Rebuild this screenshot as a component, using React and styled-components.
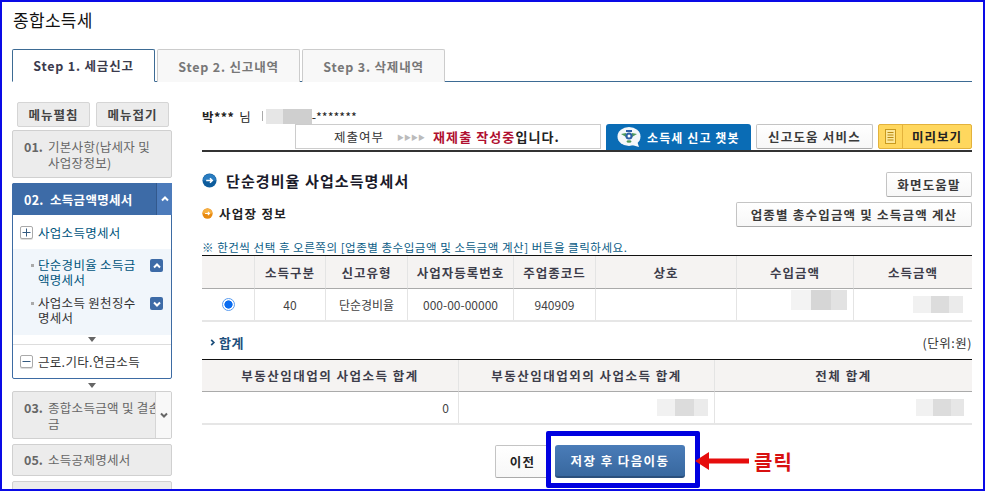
import React from 'react'
import styled, { createGlobalStyle } from 'styled-components'

const Global = createGlobalStyle`
  html, body { margin: 0; padding: 0; background: #fff; }
  body { font-family: "Noto Sans CJK KR", "Noto Sans", sans-serif; color: #333; }
  * { box-sizing: border-box; }
`

const Frame = styled.div`
  position: relative;
  width: 985px;
  height: 491px;
  border: 2px solid #0a0ae6;
  overflow: hidden;
  padding: 0 11px 0 10px;
`

const Title = styled.h1`
  margin: 0;
  height: 47px;
  padding: 5px 0 0 1px;
  font-size: 17px;
  line-height: 26px;
  font-weight: 400;
  color: #111;
  letter-spacing: 0.3px;
`

const Tabs = styled.div`
  display: flex;
  gap: 2px;
  height: 33px;
  border-bottom: 1px solid #3d6b94;
`

const Tab = styled.div`
  width: 143px;
  height: 33px;
  display: flex;
  align-items: center;
  justify-content: center;
  font-size: 12.5px;
  font-weight: 700;
  letter-spacing: 0.8px;
  border: 1px solid ${p => (p.$active ? '#3d6b94' : '#ccc')};
  border-bottom: ${p => (p.$active ? '1px solid #fff' : 'none')};
  background: ${p => (p.$active ? '#fff' : '#f8f8f8')};
  color: ${p => (p.$active ? '#3b3b4d' : '#777')};
  border-radius: 2px 2px 0 0;
`

const Body = styled.div`
  display: flex;
  gap: 30px;
  margin-top: 20px;
`

const Sidebar = styled.aside`
  width: 160px;
  flex: none;
`

const MenuButtons = styled.div`
  display: flex;
  gap: 6px;
  padding-left: 5px;
  margin-bottom: 3px;
`

const MenuButton = styled.div`
  width: 73px;
  height: 25px;
  display: flex;
  align-items: center;
  justify-content: center;
  background: #ececec;
  border: 1px solid #d5d5d5;
  border-radius: 2px;
  font-size: 12.5px;
  font-weight: 700;
  letter-spacing: 1px;
  color: #444;
`

const Step = styled.div`
  position: relative;
  display: flex;
  height: ${p => p.$h}px;
  margin-bottom: 5px;
  padding: ${p => p.$top || 8}px 0 0 11px;
  background: #ececec;
  border: 1px solid #d0d0d0;
  border-radius: 2px;
  font-size: 12.5px;
  line-height: 16px;
  color: #666;
  overflow: hidden;
`

const StepNo = styled.b`
  flex: none;
  width: 24px;
  color: #666;
`

const StepText = styled.span`
  width: 112px;
  flex: none;
  letter-spacing: 0.3px;
  word-break: keep-all;
`

const StepClip = styled.span`
  width: 121px;
  flex: none;
  letter-spacing: 0.3px;
  word-break: break-all;
`

const StepToggle = styled.div`
  position: absolute;
  top: 0;
  right: 0;
  bottom: 0;
  width: 16px;
  display: flex;
  align-items: center;
  justify-content: center;
  background: #f8f8f8;
  border-left: 1px solid #d6d6d6;
`

const OpenStep = styled.div`
  border: 1px solid #3d6ba3;
  border-radius: 2px;
  background: #fff;
`

const OpenHead = styled.div`
  display: flex;
  align-items: center;
  height: 32px;
  margin: -1px -1px 0;
  padding-left: 12px;
  background: #3d6ba7;
  border-radius: 2px 2px 0 0;
  font-size: 12.5px;
  font-weight: 700;
  letter-spacing: 0.3px;
  color: #fff;
  position: relative;
`

const OpenToggle = styled.div`
  position: absolute;
  top: 0;
  right: 0;
  bottom: 0;
  width: 16px;
  display: flex;
  align-items: center;
  justify-content: center;
  background: #4c7bbb;
  border-left: 1px solid #33598d;
`

const SubRow = styled.div`
  display: flex;
  align-items: center;
  gap: 5px;
  height: ${p => p.$h}px;
  padding-left: 7px;
  font-size: 12.5px;
  letter-spacing: 0.3px;
  color: ${p => (p.$link ? '#00557d' : '#333')};
`

const PlusBox = styled.span`
  width: 13px;
  height: 13px;
  flex: none;
  display: flex;
  align-items: center;
  justify-content: center;
  background: #fff;
  border: 1px solid #aaa;
  border-radius: 2px;
  box-shadow: 0 1px 0 #ddd;
`

const SubList = styled.div`
  background: #f1f6fb;
  padding-top: 9px;
  height: 86px;
`

const SubItem = styled.div`
  position: relative;
  display: flex;
  height: 38px;
  padding-left: 18px;
  font-size: 12.5px;
  line-height: 14.5px;
  letter-spacing: 0.3px;
  color: ${p => (p.$link ? '#00557d' : '#333')};
  &::before {
    content: '';
    position: absolute;
    left: 18px;
    top: 6px;
    width: 3px;
    height: 3px;
    background: #aaa;
  }
`

const SubText = styled.span`
  display: block;
  width: 108px;
  padding-left: 7px;
  word-break: break-all;
`

const SquareToggle = styled.span`
  width: 13px;
  height: 13px;
  margin-top: 1px;
  margin-left: 11px;
  flex: none;
  display: flex;
  align-items: center;
  justify-content: center;
  background: #3d6ba7;
  border-radius: 2px;
`

const ArrowDown = styled.div`
  display: flex;
  justify-content: center;
  align-items: center;
  height: ${p => p.$h}px;
  border-bottom: ${p => (p.$line ? '1px solid #ddd' : 'none')};
  &::after {
    content: '';
    border-left: 4.5px solid transparent;
    border-right: 4.5px solid transparent;
    border-top: 5px solid #666;
  }
`

const Main = styled.main`
  width: 770px;
  flex: none;
`

const UserRow = styled.div`
  display: flex;
  align-items: center;
  height: 22px;
  padding-top: 6px;
  font-size: 12.5px;
  color: #222;
`

const UserName = styled.b`
  font-weight: 700;
  letter-spacing: 0.4px;
`

const UserSuffix = styled.span`
  margin: 0 11px 0 5px;
`

const Divider = styled.span`
  width: 1px;
  height: 10px;
  background: #aaa;
  margin-right: 3px;
`

const Blur = styled.span`
  display: inline-block;
  flex: none;
  width: ${p => p.$w}px;
  height: ${p => p.$h}px;
  margin-bottom: ${p => p.$up || 0}px;
  background: linear-gradient(90deg, ${p => p.$a} 0 36%, ${p => p.$b} 36% 72%, ${p => p.$c} 72%);
`

const Toolbar = styled.div`
  display: flex;
  justify-content: flex-end;
  gap: 5px;
  height: 28px;
  border-bottom: 2px solid #333;
`

const Status = styled.div`
  width: 306px;
  height: 25px;
  display: flex;
  align-items: center;
  padding-left: 38px;
  background: #fff;
  border: 1px solid #ccc;
  font-size: 12.5px;
  letter-spacing: 1px;
  color: #333;
`

const Chevrons = styled.span`
  margin: 0 8px 0 13px;
  font-size: 7px;
  letter-spacing: 0;
  color: #bbb;
`

const Red = styled.b`
  font-size: 13px;
  color: #b01030;
  letter-spacing: 1.1px;
`

const Strong = styled.b`
  font-size: 13px;
  color: #222;
  letter-spacing: 1.1px;
`

const ChatButton = styled.div`
  width: 145px;
  height: 26px;
  display: flex;
  align-items: center;
  gap: 5px;
  padding-left: 11px;
  background: #0a6cb5;
  border-radius: 3px 3px 0 0;
  color: #fff;
  font-size: 12px;
  font-weight: 700;
  letter-spacing: 1.1px;
`

const Button = styled.div`
  width: ${p => p.$w}px;
  height: 25px;
  display: flex;
  align-items: center;
  justify-content: center;
  flex: none;
  background: linear-gradient(#fff, #f7f7f7);
  border: 1px solid #c4c4c4;
  border-bottom-color: #aaa;
  border-radius: 2px;
  font-size: 12.5px;
  font-weight: 700;
  letter-spacing: 1.2px;
  color: #3a3a3a;
`

const Preview = styled.div`
  width: 94px;
  height: 25px;
  display: flex;
  background: #ffd75e;
  border: 1px solid #e3b23c;
  border-radius: 2px;
  font-size: 12.5px;
  font-weight: 700;
  letter-spacing: 1px;
  color: #222;
`

const PreviewIcon = styled.span`
  width: 24px;
  display: flex;
  align-items: center;
  justify-content: center;
  border-right: 1px solid #e3b23c;
`

const PreviewLabel = styled.span`
  flex: 1;
  display: flex;
  align-items: center;
  justify-content: center;
`

const HeadingRow = styled.div`
  display: flex;
  justify-content: space-between;
  align-items: flex-start;
  margin-top: 20px;
  height: 30px;
`

const Heading = styled.h2`
  display: flex;
  align-items: center;
  gap: 9px;
  margin: 0;
  height: 17px;
  font-size: 15px;
  font-weight: 700;
  letter-spacing: 1.1px;
  color: #1a1a2a;
`

const SubHeadRow = styled.div`
  display: flex;
  justify-content: space-between;
  align-items: center;
  height: 25px;
`

const SubHead = styled.h3`
  display: flex;
  align-items: center;
  gap: 6px;
  margin: 0 0 3px;
  font-size: 12.5px;
  font-weight: 700;
  letter-spacing: 1.3px;
  color: #222;
`

const Note = styled.p`
  margin: 13px 0 0;
  height: 15px;
  font-size: 11.5px;
  line-height: 15px;
  letter-spacing: 0.53px;
  white-space: nowrap;
  color: #0a5c86;
`

const Table = styled.div`
  display: grid;
  grid-template-columns: ${p => p.$cols};
  border-top: 1px solid #111;
  border-bottom: 2px solid #e6e6e6;
  font-size: 12px;
`

const Th = styled.div`
  height: ${p => p.$h || 33}px;
  display: flex;
  align-items: center;
  justify-content: center;
  background: #f5f3f2;
  border-bottom: 1px solid #aaa;
  border-left: ${p => (p.$first ? 'none' : '1px solid #e4e4e4')};
  font-size: 12.5px;
  font-weight: 700;
  letter-spacing: ${p => p.$ls || 1}px;
  color: #3d3d4a;
`

const Td = styled.div`
  height: 31px;
  display: flex;
  align-items: center;
  justify-content: ${p => p.$align || 'center'};
  padding-right: ${p => p.$pr || 0}px;
  border-left: ${p => (p.$first ? 'none' : '1px solid #e4e4e4')};
  color: #444;
`

const Radio = styled.span`
  width: 13px;
  height: 13px;
  border-radius: 50%;
  border: 1px solid #5a9cf0;
  background: radial-gradient(circle, #0a6cf0 0 3.8px, #fff 4.4px);
`

const SumRow = styled.div`
  display: flex;
  justify-content: space-between;
  align-items: center;
  height: 33px;
  margin-top: 4px;
`

const SumTitle = styled.div`
  display: flex;
  align-items: center;
  gap: 3px;
  padding-left: 7px;
  font-size: 13px;
  font-weight: 700;
  letter-spacing: 0.5px;
  color: #1d4f7c;
`

const Unit = styled.span`
  font-size: 12.5px;
  letter-spacing: 0.5px;
  color: #333;
`

const Actions = styled.div`
  display: flex;
  justify-content: center;
  gap: 5px;
  margin-top: 20px;
  padding-left: 6px;
`

const PrevButton = styled(Button)`
  height: 33px;
  color: #222;
`

const SaveButton = styled.div`
  width: 130px;
  height: 33px;
  display: flex;
  align-items: center;
  justify-content: center;
  background: linear-gradient(#4a7cb8, #38689f);
  border-bottom: 2px solid #2a4f7c;
  border-radius: 3px;
  color: #fff;
  font-size: 12.5px;
  font-weight: 700;
  letter-spacing: 1.4px;
`

const Highlight = styled.div`
  position: absolute;
  left: 544px;
  top: 429px;
  width: 154px;
  height: 57px;
  border: 5px solid #0000e0;
  border-radius: 2px;
`

const Callout = styled.div`
  position: absolute;
  left: 693px;
  top: 445px;
  display: flex;
  align-items: center;
  gap: 5px;
  height: 28px;
  font-size: 20px;
  font-weight: 700;
  letter-spacing: 1px;
  color: #d81010;
`

const caretPaths = {
  up: 'M1 5.5 L4 2.5 L7 5.5',
  down: 'M1 2.5 L4 5.5 L7 2.5',
  right: 'M2.5 1 L5.5 4 L2.5 7',
}

const Caret = ({ dir = 'up', color = '#fff', size = 8 }) => (
  <svg width={size} height={size} viewBox="0 0 8 8">
    <path d={caretPaths[dir]} fill="none" stroke={color} strokeWidth="2" />
  </svg>
)

const Bullet = ({ from, to, size }) => (
  <svg width={size} height={size} viewBox="0 0 16 16" style={{ flex: 'none' }}>
    <circle cx="8" cy="8" r="7.5" fill={from} />
    <path d="M1 8 A7 7 0 0 1 15 8 Z" fill={to} />
    <path d="M4.5 8 H11 M8.5 5.5 L11 8 L8.5 10.5" fill="none" stroke="#fff" strokeWidth="1.6" />
  </svg>
)

const Sign = ({ plus }) => (
  <svg width="9" height="9" viewBox="0 0 9 9">
    <path d={plus ? 'M0.5 4.5 H8.5 M4.5 0.5 V8.5' : 'M0.5 4.5 H8.5'} stroke="#345a80" />
  </svg>
)

const ChatIcon = () => (
  <svg width="25" height="22" viewBox="0 0 25 22">
    <ellipse cx="12" cy="10.5" rx="11.5" ry="9.5" fill="#f4f7fa" />
    <path d="M15 19 L22 21 L20 15 Z" fill="#f4f7fa" />
    <path d="M4 8 L9 7 L9 11 Z M20 8 L15 7 L15 11 Z" fill="#4f9a5c" />
    <path d="M9 4 H15 V6 H9 Z" fill="#2d5fa6" />
    <circle cx="12" cy="10" r="3.6" fill="#2d5fa6" />
    <circle cx="12" cy="10" r="1.5" fill="#fff" />
    <ellipse cx="12" cy="15.5" rx="2.5" ry="1.3" fill="#4f9a5c" />
  </svg>
)

const NotesIcon = () => (
  <svg width="11" height="15" viewBox="0 0 11 15">
    <rect x="0.5" y="0.5" width="10" height="14" fill="#fce79a" stroke="#c99a1f" />
    <path d="M2.5 3.5 H8.5 M2.5 6 H8.5 M2.5 8.5 H8.5 M2.5 11 H8.5" stroke="#b98a14" />
  </svg>
)

const ArrowLeft = () => (
  <svg width="54" height="20" viewBox="0 0 54 20">
    <path d="M0 10 L14 1 V7.5 H54 V12.5 H14 V19 Z" fill="#e60d0d" />
  </svg>
)

const App = () => {
  return (
    <Frame>
      <Global />
      <Title>종합소득세</Title>
      <Tabs>
        <Tab $active>Step 1. 세금신고</Tab>
        <Tab>Step 2. 신고내역</Tab>
        <Tab>Step 3. 삭제내역</Tab>
      </Tabs>
      <Body>
        <Sidebar>
          <MenuButtons>
            <MenuButton>메뉴펼침</MenuButton>
            <MenuButton>메뉴접기</MenuButton>
          </MenuButtons>
          <Step $h={48}>
            <StepNo>01.</StepNo>
            <StepText>기본사항(납세자 및 사업장정보)</StepText>
          </Step>
          <OpenStep>
            <OpenHead>
              02.&nbsp; 소득금액명세서
              <OpenToggle><Caret /></OpenToggle>
            </OpenHead>
            <SubRow $h={34} $link><PlusBox><Sign plus /></PlusBox>사업소득명세서</SubRow>
            <SubList>
              <SubItem $link>
                <SubText>단순경비율 소득금액명세서</SubText>
                <SquareToggle><Caret /></SquareToggle>
              </SubItem>
              <SubItem>
                <SubText>사업소득 원천징수명세서</SubText>
                <SquareToggle><Caret dir="down" /></SquareToggle>
              </SubItem>
            </SubList>
            <ArrowDown $h={10} $line />
            <SubRow $h={33}><PlusBox><Sign /></PlusBox>근로.기타.연금소득</SubRow>
          </OpenStep>
          <ArrowDown $h={12} />
          <Step $h={48}>
            <StepNo>03.</StepNo>
            <StepClip>종합소득금액 및 결손금</StepClip>
            <StepToggle><Caret dir="down" color="#666" /></StepToggle>
          </Step>
          <Step $h={32} $top={7}>
            <StepNo>05.</StepNo>
            <StepText>소득공제명세서</StepText>
          </Step>
          <Step $h={33} />
        </Sidebar>
        <Main>
          <UserRow>
            <UserName>박***</UserName>
            <UserSuffix>님</UserSuffix>
            <Divider />
            <Blur $w={46} $h={15} $a="#e6e6e6" $b="#cfcfcf" $c="#cfcfcf" />
            -*******
          </UserRow>
          <Toolbar>
            <Status>
              제출여부
              <Chevrons>▶▶▶▶</Chevrons>
              <Red>재제출 작성중</Red><Strong>입니다.</Strong>
            </Status>
            <ChatButton><ChatIcon />소득세 신고 챗봇</ChatButton>
            <Button $w={117}>신고도움 서비스</Button>
            <Preview>
              <PreviewIcon><NotesIcon /></PreviewIcon>
              <PreviewLabel>미리보기</PreviewLabel>
            </Preview>
          </Toolbar>
          <HeadingRow>
            <Heading>
              <Bullet from="#0d5c9c" to="#2a7cc0" size={15} />
              단순경비율 사업소득명세서
            </Heading>
            <Button $w={86}>화면도움말</Button>
          </HeadingRow>
          <SubHeadRow>
            <SubHead>
              <Bullet from="#e88a10" to="#f7b040" size={11} />
              사업장 정보
            </SubHead>
            <Button $w={236}>업종별 총수입금액 및 소득금액 계산</Button>
          </SubHeadRow>
          <Note>※ 한건씩 선택 후 오른쪽의 [업종별 총수입금액 및 소득금액 계산] 버튼을 클릭하세요.</Note>
          <Table $cols="52px 71px 82px 106px 82px 141px 117px 119px">
            <Th $first />
            <Th>소득구분</Th>
            <Th>신고유형</Th>
            <Th>사업자등록번호</Th>
            <Th>주업종코드</Th>
            <Th>상호</Th>
            <Th>수입금액</Th>
            <Th>소득금액</Th>
            <Td $first><Radio /></Td>
            <Td>40</Td>
            <Td>단순경비율</Td>
            <Td>000-00-00000</Td>
            <Td>940909</Td>
            <Td />
            <Td $align="flex-end" $pr={6}>
              <Blur $w={56} $h={20} $up={9} $a="#f3f3f3" $b="#d6d6d6" $c="#e2e2e2" />
            </Td>
            <Td $align="flex-end" $pr={9}>
              <Blur $w={50} $h={17} $up={1} $a="#f1f1f1" $b="#dcdcdc" $c="#ebebeb" />
            </Td>
          </Table>
          <SumRow>
            <SumTitle>
              <Caret dir="right" color="#1d4f7c" size={7} />합계
            </SumTitle>
            <Unit>(단위:원)</Unit>
          </SumRow>
          <Table $cols="256px 256px 258px">
            <Th $first $h={32} $ls={1.5}>부동산임대업의 사업소득 합계</Th>
            <Th $h={32} $ls={1.5}>부동산임대업외의 사업소득 합계</Th>
            <Th $h={32} $ls={1.5}>전체 합계</Th>
            <Td $first $align="flex-end" $pr={9}>0</Td>
            <Td $align="flex-end" $pr={6}>
              <Blur $w={51} $h={17} $a="#f1f1f1" $b="#dcdcdc" $c="#ebebeb" />
            </Td>
            <Td $align="flex-end" $pr={8}>
              <Blur $w={48} $h={17} $a="#f1f1f1" $b="#dcdcdc" $c="#e6e6e6" />
            </Td>
          </Table>
          <Actions>
            <PrevButton $w={55}>이전</PrevButton>
            <SaveButton>저장 후 다음이동</SaveButton>
          </Actions>
        </Main>
      </Body>
      <Highlight />
      <Callout><ArrowLeft />클릭</Callout>
    </Frame>
  )
}

export default App
